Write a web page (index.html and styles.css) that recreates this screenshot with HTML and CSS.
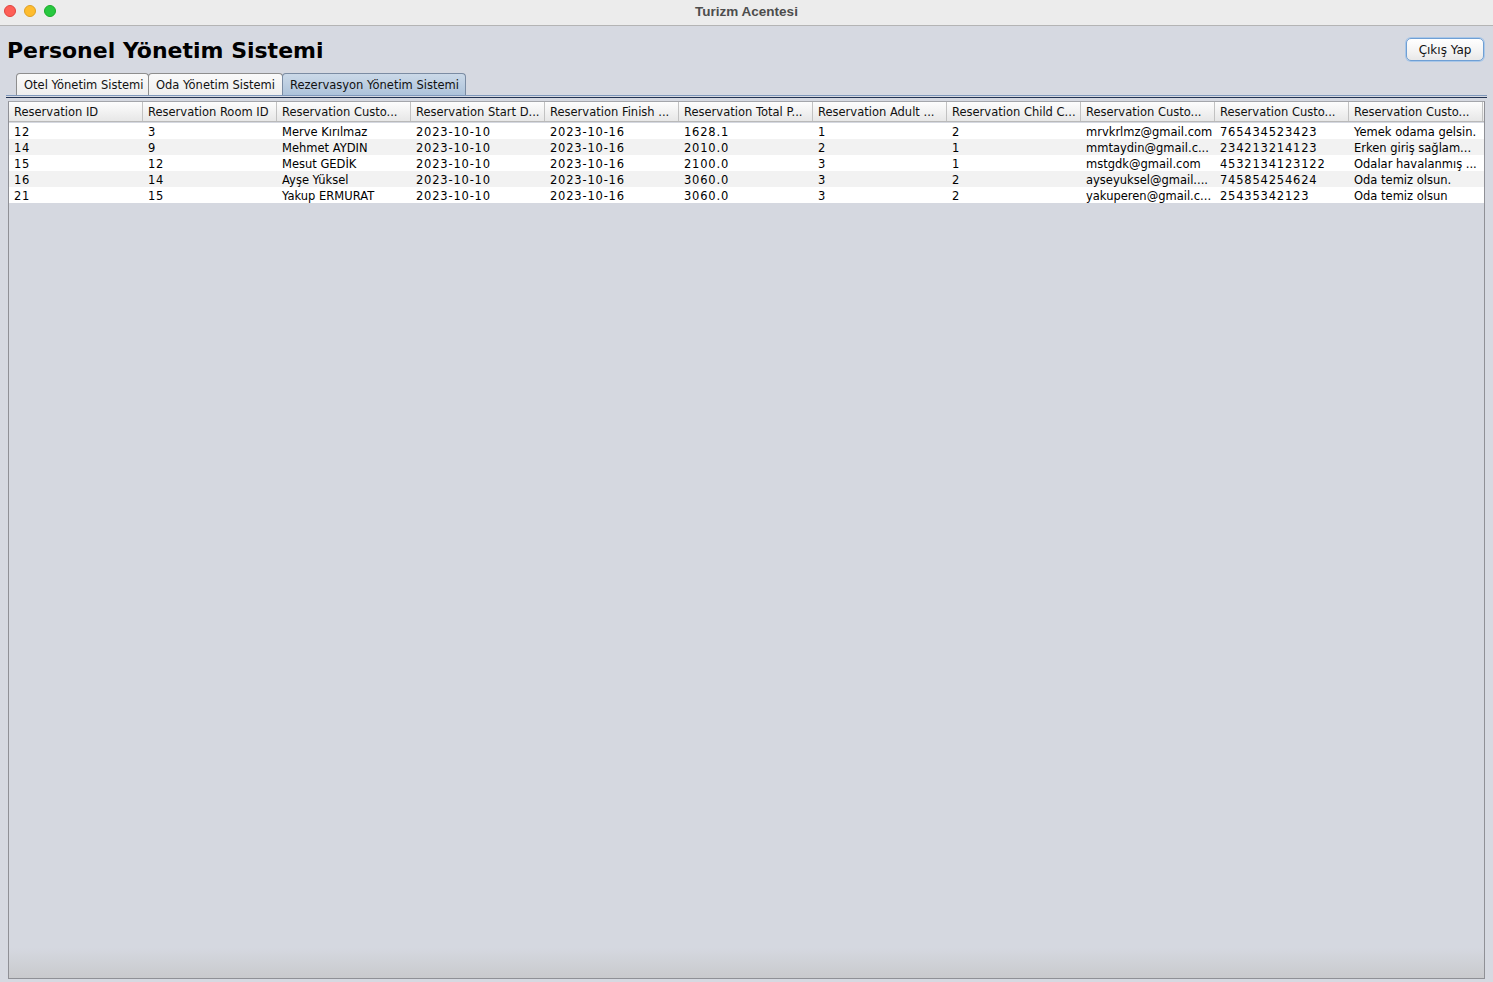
FILE: index.html
```html
<!DOCTYPE html>
<html lang="tr">
<head>
<meta charset="utf-8">
<title>Turizm Acentesi</title>
<link rel="stylesheet" href="styles.css">
</head>
<body>
<div class="window">
  <div class="titlebar">
    <div class="lights">
      <span class="light red"></span>
      <span class="light yellow"></span>
      <span class="light green"></span>
    </div>
    <div class="wtitle">Turizm Acentesi</div>
  </div>
  <div class="content">
    <div class="header-row">
      <h1 class="heading">Personel Yönetim Sistemi</h1>
      <button class="logout">Çıkış Yap</button>
    </div>
    <div class="tabs">
      <div class="tab">Otel Yönetim Sistemi</div>
      <div class="tab">Oda Yönetim Sistemi</div>
      <div class="tab active">Rezervasyon Yönetim Sistemi</div>
    </div>
    <div class="tabpane">
      <div class="scrollpane">
        <div class="table">
          <div class="row head">
            <div class="cell">Reservation ID</div>
            <div class="cell">Reservation Room ID</div>
            <div class="cell">Reservation Custo...</div>
            <div class="cell">Reservation Start D...</div>
            <div class="cell">Reservation Finish ...</div>
            <div class="cell">Reservation Total P...</div>
            <div class="cell">Reservation Adult ...</div>
            <div class="cell">Reservation Child C...</div>
            <div class="cell">Reservation Custo...</div>
            <div class="cell">Reservation Custo...</div>
            <div class="cell">Reservation Custo...</div>
          </div>
          <div class="row">
            <div class="cell num">12</div><div class="cell num">3</div><div class="cell">Merve Kırılmaz</div><div class="cell num">2023-10-10</div><div class="cell num">2023-10-16</div><div class="cell num">1628.1</div><div class="cell num">1</div><div class="cell num">2</div><div class="cell">mrvkrlmz@gmail.com</div><div class="cell num">765434523423</div><div class="cell">Yemek odama gelsin.</div>
          </div>
          <div class="row alt">
            <div class="cell num">14</div><div class="cell num">9</div><div class="cell">Mehmet AYDIN</div><div class="cell num">2023-10-10</div><div class="cell num">2023-10-16</div><div class="cell num">2010.0</div><div class="cell num">2</div><div class="cell num">1</div><div class="cell">mmtaydin@gmail.c...</div><div class="cell num">234213214123</div><div class="cell">Erken giriş sağlam...</div>
          </div>
          <div class="row">
            <div class="cell num">15</div><div class="cell num">12</div><div class="cell">Mesut GEDİK</div><div class="cell num">2023-10-10</div><div class="cell num">2023-10-16</div><div class="cell num">2100.0</div><div class="cell num">3</div><div class="cell num">1</div><div class="cell">mstgdk@gmail.com</div><div class="cell num">4532134123122</div><div class="cell">Odalar havalanmış ...</div>
          </div>
          <div class="row alt">
            <div class="cell num">16</div><div class="cell num">14</div><div class="cell">Ayşe Yüksel</div><div class="cell num">2023-10-10</div><div class="cell num">2023-10-16</div><div class="cell num">3060.0</div><div class="cell num">3</div><div class="cell num">2</div><div class="cell">ayseyuksel@gmail....</div><div class="cell num">745854254624</div><div class="cell">Oda temiz olsun.</div>
          </div>
          <div class="row">
            <div class="cell num">21</div><div class="cell num">15</div><div class="cell">Yakup ERMURAT</div><div class="cell num">2023-10-10</div><div class="cell num">2023-10-16</div><div class="cell num">3060.0</div><div class="cell num">3</div><div class="cell num">2</div><div class="cell">yakuperen@gmail.c...</div><div class="cell num">25435342123</div><div class="cell">Oda temiz olsun</div>
          </div>
        </div>
      </div>
    </div>
  </div>
</div>
</body>
</html>
```

FILE: styles.css
```css
* { box-sizing: border-box; }
html, body { margin: 0; padding: 0; }
body {
  width: 1493px;
  height: 982px;
  overflow: hidden;
  font-family: "DejaVu Sans", "Liberation Sans", sans-serif;
  background: #d6d9e1;
}
.window {
  display: flex;
  flex-direction: column;
  height: 982px;
}
.titlebar {
  height: 26px;
  flex: none;
  background: #ececec;
  border-bottom: 1px solid #b4b4b4;
  display: flex;
  align-items: center;
  justify-content: center;
  position: relative;
}
.lights {
  position: absolute;
  left: 4px;
  top: 5px;
  display: flex;
  gap: 8px;
}
.light {
  width: 12px;
  height: 12px;
  border-radius: 50%;
  display: block;
}
.light.red { background: #fe5f57; border: 0.5px solid #e0443e; }
.light.yellow { background: #febc2e; border: 0.5px solid #dea123; }
.light.green { background: #28c840; border: 0.5px solid #1aab29; }
.wtitle {
  font-family: "Liberation Sans", sans-serif;
  font-weight: bold;
  font-size: 13.5px;
  color: #4d4d4d;
  margin-left: 0;
  margin-top: -3px;
}
.content {
  flex: 1;
  display: flex;
  flex-direction: column;
  padding: 0 6px 1px 6px;
  min-height: 0;
}
.header-row {
  display: flex;
  justify-content: space-between;
  align-items: flex-start;
  height: 47px;
  flex: none;
}
.heading {
  margin: 11px 0 0 1px;
  font-size: 22px;
  font-weight: bold;
  color: #000;
  line-height: 28px;
  white-space: nowrap;
}
.logout {
  margin-top: 12px;
  margin-right: 3px;
  width: 78px;
  height: 23px;
  border: 1px solid #6f9fd4;
  box-shadow: 0 0 0 1px #a9c7e8;
  border-radius: 5px;
  background: linear-gradient(#ffffff, #f3f3f3 60%, #e8e8e8);
  font-family: "DejaVu Sans", sans-serif;
  font-size: 12px;
  color: #111;
  padding: 0;
}
.tabs {
  display: flex;
  height: 22px;
  flex: none;
  padding-left: 10px;
}
.tab {
  height: 22px;
  padding: 0 0 0 7px;
  font-size: 11.5px;
  line-height: 22px;
  color: #111;
  white-space: nowrap;
  overflow: hidden;
  background: linear-gradient(#fafafa, #eeeeee);
  border: 1px solid #8e8e8e;
  border-bottom: none;
  border-radius: 4px 4px 0 0;
  margin-right: -1px;
}
.tab:nth-child(1) { width: 133px; }
.tab:nth-child(2) { width: 135px; }
.tab.active {
  width: 184px;
  background: linear-gradient(#cbd9e8, #aec3da);
  border-color: #7b8ca3;
}
.tabpane {
  flex: 1;
  min-height: 0;
  border-top: 1px solid #7f98bb;
  padding: 5px 2px 2px 2px;
  position: relative;
  display: flex;
}
.tabpane::before {
  content: "";
  position: absolute;
  left: 0;
  right: 0;
  top: 1px;
  height: 1px;
  background: #223352;
}
.scrollpane {
  flex: 1;
  border: 1px solid #8f9096;
  border-top-color: #a4a6ab;
  background: linear-gradient(#d5d8e0 0, #d5d8e0 calc(100% - 30px), #c9cacd 100%);
}
.table {
  display: flex;
  flex-direction: column;
}
.row {
  display: grid;
  grid-template-columns: repeat(11, 134px);
  height: 16px;
  background: #ffffff;
}
.row.alt { background: #f2f2f2; }
.row.head {
  height: 20px;
  background: linear-gradient(#fdfdfd, #f2f2f2 50%, #e7e7e7);
  border-bottom: 1px solid #b9b9b9;
  margin-bottom: 1px;
}
.cell {
  font-size: 11.5px;
  line-height: 16px;
  padding-top: 1px;
  color: #000;
  padding-left: 5px;
  white-space: nowrap;
  overflow: hidden;
}
.cell.num { letter-spacing: 0.8px; }
.row.head .cell {
  line-height: 18px;
  padding-top: 1px;
  border-right: 1px solid #c2c2c2;
  color: #111;
}
```
